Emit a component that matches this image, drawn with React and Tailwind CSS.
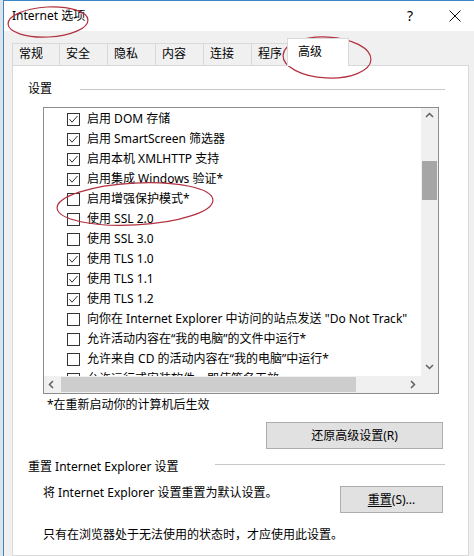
import React from 'react';

const rows = [
  ['启用 DOM 存储', true],
  ['启用 SmartScreen 筛选器', true],
  ['启用本机 XMLHTTP 支持', true],
  ['启用集成 Windows 验证*', true],
  ['启用增强保护模式*', false],
  ['使用 SSL 2.0', false],
  ['使用 SSL 3.0', false],
  ['使用 TLS 1.0', true],
  ['使用 TLS 1.1', true],
  ['使用 TLS 1.2', true],
  ['向你在 Internet Explorer 中访问的站点发送 "Do Not Track"', false],
  ['允许活动内容在“我的电脑”的文件中运行*', false],
  ['允许来自 CD 的活动内容在“我的电脑”中运行*', false],
  ['允许运行或安装软件，即使签名无效', false],
];

const tabs = [
  ['常规', 'w-[47px]'],
  ['安全', 'w-[48px]'],
  ['隐私', 'w-[48px]'],
  ['内容', 'w-[48px]'],
  ['连接', 'w-[48px]'],
  ['程序', 'w-[38px]'],
];

function Checkbox({ checked }) {
  return (
    <svg width="13" height="13" viewBox="0 0 13 13" className="shrink-0 mr-[7px]">
      <rect x="0.5" y="0.5" width="12" height="12" fill="#fff" stroke="#333" />
      {checked && <path d="M2.5 6.2 L5 9.2 L10.5 3" fill="none" stroke="#333" strokeWidth="1" />}
    </svg>
  );
}

function Chevron({ dir }) {
  const d = {
    up: 'M2 6 L5.5 2.5 L9 6',
    down: 'M2 3 L5.5 6.5 L9 3',
    left: 'M6 2 L2.5 5.5 L6 9',
    right: 'M4 2 L7.5 5.5 L4 9',
  }[dir];
  return (
    <svg width="11" height="11" viewBox="0 0 11 11">
      <path d={d} fill="none" stroke="#606060" strokeWidth="1.5" />
    </svg>
  );
}

function Button({ children, className }) {
  return (
    <div className={`flex items-center justify-center bg-[#e1e1e1] border border-[#adadad] h-[27px] ${className}`}>
      {children}
    </div>
  );
}

export default function App() {
  return (
    <div className="relative w-[474px] h-[556px] overflow-hidden flex bg-[#f0f0f0] text-[12px] text-black font-['Noto_Sans','Noto_Sans_CJK_SC',sans-serif]">
      <div className="w-[3px] shrink-0 bg-[#dce3e9]" />
      <div className="flex-1 flex flex-col border-l border-t border-[#3b86c6]">
        {/* title bar */}
        <div className="h-[30px] shrink-0 bg-white flex items-center pl-[8px]">
          <span>Internet 选项</span>
          <span className="ml-auto w-[20px] text-center text-[14px] leading-none">?</span>
          <svg width="12" height="12" viewBox="0 0 12 12" className="ml-[29px] mr-[13px]">
            <path d="M0.5 0.5 L11.5 11.5 M11.5 0.5 L0.5 11.5" stroke="#111" strokeWidth="1" />
          </svg>
        </div>

        {/* tabs */}
        <div className="flex items-end h-[34px] pt-[7px] pl-[8px] shrink-0">
          {tabs.map(([label, w]) => (
            <div key={label} className={`${w} h-[22px] border-t border-l border-[#d9d9d9] bg-[#f0f0f0] pl-[6px] leading-[20px]`}>
              {label}
            </div>
          ))}
          <div className="relative z-10 -ml-[2px] -mb-px w-[62px] h-[28px] bg-white border-t border-l border-r border-[#d9d9d9] pl-[10px] pt-[3px] leading-[20px]">
            高级
          </div>
        </div>

        {/* panel */}
        <div className="ml-[8px] w-[457px] flex-1 bg-white border border-[#d9d9d9] pl-[15px]">
          <div className="w-[417px] flex flex-col">
            <div className="mt-[13px] h-[20px] flex items-center">
              <span>设置</span>
              <div className="ml-[28px] flex-1 h-px bg-[#c8c8c8]" />
            </div>

            <div className="mt-[8px] ml-[15px] w-[396px] h-[287px] border border-[#8c8c8c] flex flex-col">
              <div className="flex h-[268px]">
                <div className="flex-1 overflow-hidden pt-px">
                  {rows.map(([label, checked]) => (
                    <div key={label} className="h-[20px] flex items-center pl-[23px] whitespace-nowrap">
                      <Checkbox checked={checked} />
                      <span>{label}</span>
                    </div>
                  ))}
                </div>
                <div className="w-[17px] bg-[#f0f0f0] flex flex-col">
                  <div className="h-[17px] flex items-center justify-center">
                    <Chevron dir="up" />
                  </div>
                  <div className="flex-1 pt-[36px]">
                    <div className="mx-px h-[39px] bg-[#a6a6a6]" />
                  </div>
                  <div className="h-[17px] flex items-center justify-center">
                    <Chevron dir="down" />
                  </div>
                </div>
              </div>
              <div className="flex h-[17px] bg-[#f0f0f0]">
                <div className="w-[17px] flex items-center justify-center">
                  <Chevron dir="left" />
                </div>
                <div className="flex-1 py-px">
                  <div className="w-[295px] h-full bg-[#cdcdcd]" />
                </div>
                <div className="w-[17px] flex items-center justify-center">
                  <Chevron dir="right" />
                </div>
                <div className="w-[17px]" />
              </div>
            </div>

            <div className="mt-px h-[20px] leading-[20px] pl-[19px]">*在重新启动你的计算机后生效</div>

            <Button className="mt-[7px] self-end mr-[2px] w-[177px]">还原高级设置(R)</Button>

            <div className="mt-[8px] h-[20px] flex items-start">
              <span className="leading-[20px]">重置 Internet Explorer 设置</span>
              <div className="ml-auto mt-[7px] w-[230px] h-px bg-[#c8c8c8]" />
            </div>

            <div className="mt-[6px] flex items-start justify-between">
              <span className="pl-[15px] leading-[20px]">将 Internet Explorer 设置重置为默认设置。</span>
              <Button className="mt-[3px] mr-[2px] w-[103px]">
                <span className="underline underline-offset-2">重置</span>
                <span>(S)...</span>
              </Button>
            </div>

            <div className="mt-[12px] pl-[15px] leading-[20px]">只有在浏览器处于无法使用的状态时，才应使用此设置。</div>
          </div>
        </div>
      </div>

      {/* red annotation ellipses */}
      <svg className="absolute inset-0 pointer-events-none" width="474" height="556" viewBox="0 0 474 556">
        <g fill="none" stroke="#b3303f" strokeWidth="1.2">
          <ellipse cx="48" cy="22" rx="40" ry="15" transform="rotate(-3 48 22)" />
          <ellipse cx="327" cy="57.5" rx="44" ry="20.5" transform="rotate(3 327 57.5)" />
          <ellipse cx="135" cy="204" rx="78" ry="21" transform="rotate(-3 135 204)" />
        </g>
      </svg>
    </div>
  );
}
